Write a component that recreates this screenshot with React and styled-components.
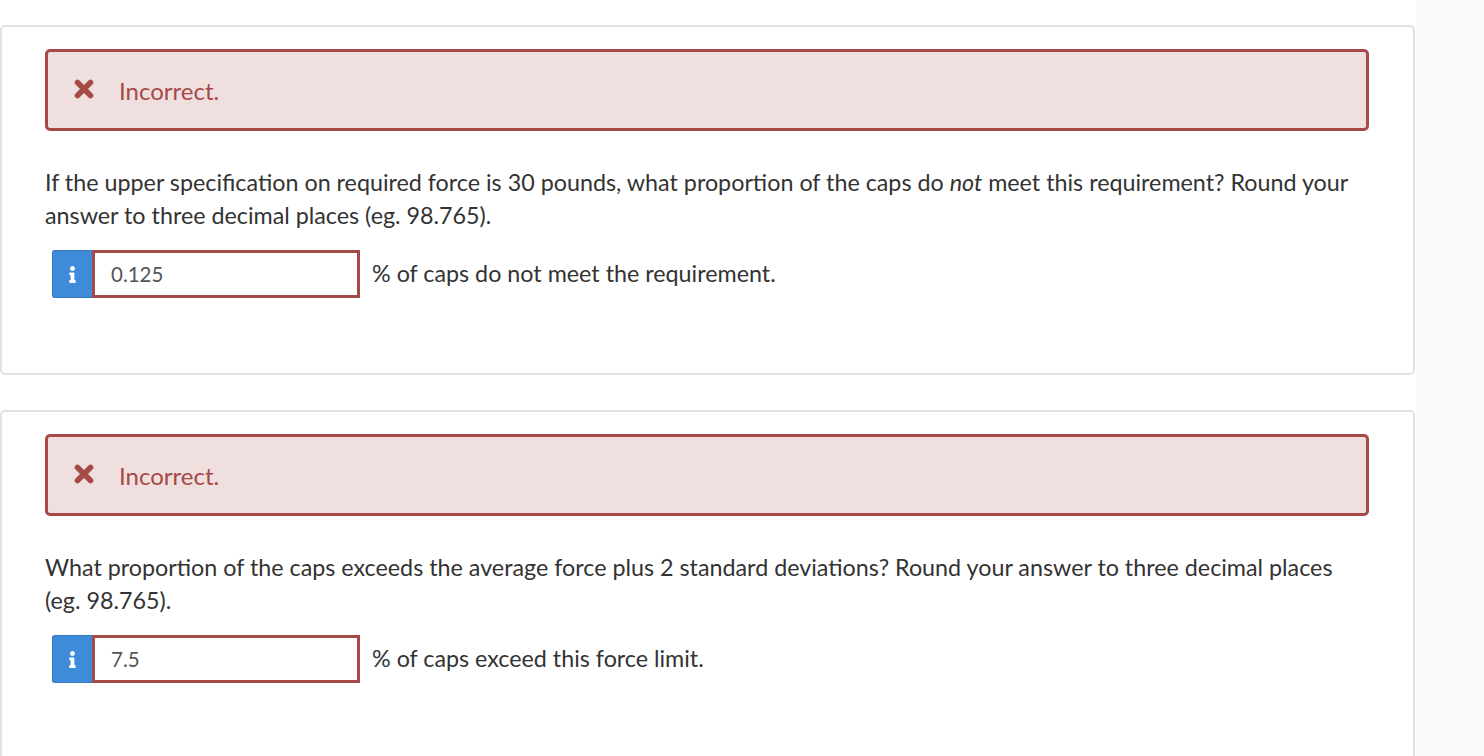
import React from "react";
import styled, { createGlobalStyle } from "styled-components";
import { FaInfo } from "react-icons/fa";

const GlobalStyle = createGlobalStyle`
  html, body {
    margin: 0;
    padding: 0;
    background: #f9f9f9;
  }
  body {
    font-family: Lato, "Open Sans", sans-serif;
    color: #333;
  }
`;

const questions = [
  {
    text: (
      <>
        If the upper specification on required force is 30 pounds, what
        proportion of the caps do <em>not</em> meet this requirement? Round
        your answer to three decimal places (eg. 98.765).
      </>
    ),
    value: "0.125",
    label: "% of caps do not meet the requirement.",
  },
  {
    text: (
      <>
        What proportion of the caps exceeds the average force plus 2 standard
        deviations? Round your answer to three decimal places (eg. 98.765).
      </>
    ),
    value: "7.5",
    label: "% of caps exceed this force limit.",
  },
];

const CrossIcon = () => (
  <svg width="22" height="20" viewBox="0 0 22 20">
    <path
      d="M4.5 3.5 L17.5 16.5 M17.5 3.5 L4.5 16.5"
      stroke="currentColor"
      strokeWidth="5.6"
      strokeLinecap="round"
      fill="none"
    />
  </svg>
);

const App = () => {
  return (
    <Page>
      <GlobalStyle />
      <Main>
        {questions.map((q, i) => (
          <Card key={i}>
            <Alert>
              <CrossIcon />
              <span>Incorrect.</span>
            </Alert>
            <Question>{q.text}</Question>
            <AnswerRow>
              <Addon>
                <FaInfo />
              </Addon>
              <Input defaultValue={q.value} />
              <Label>{q.label}</Label>
            </AnswerRow>
          </Card>
        ))}
      </Main>
      <Gutter />
    </Page>
  );
};

export default App;

const Page = styled.div`
  display: flex;
  min-height: 100vh;
`;

const Main = styled.div`
  width: 1416px;
  background: #fff;
  padding-top: 25px;
  display: flex;
  flex-direction: column;
  gap: 35px;
  box-sizing: border-box;
`;

const Gutter = styled.div`
  flex: 1;
  background: #f9f9f9;
`;

const Card = styled.div`
  width: 1415px;
  box-sizing: border-box;
  border: 2px solid #e2e2e2;
  border-radius: 5px;
  padding: 22px 44px 75px 43px;
`;

const Alert = styled.div`
  display: flex;
  align-items: center;
  gap: 24px;
  height: 82px;
  box-sizing: border-box;
  padding: 0 25px;
  background: #efdfdf;
  border: 3px solid #a54a46;
  border-radius: 5px;
  color: #a54a46;
  font-size: 24px;
  span {
    margin-top: 1px;
  }
  svg {
    flex: none;
    margin-top: -2px;
  }
`;

const Question = styled.p`
  margin: 35px 0 18px;
  font-size: 23.3px;
  line-height: 33px;
  color: #333;
`;

const AnswerRow = styled.div`
  display: flex;
  align-items: center;
  padding-left: 7px;
`;

const Addon = styled.div`
  width: 40px;
  height: 48px;
  display: flex;
  align-items: center;
  justify-content: center;
  background: #3d8bd9;
  border: 1px solid #3479c2;
  border-right: none;
  box-sizing: border-box;
  border-radius: 3px 0 0 3px;
  color: #fff;
  svg {
    font-size: 17px;
  }
`;

const Input = styled.input`
  width: 268px;
  height: 48px;
  box-sizing: border-box;
  border: 3px solid #a54a46;
  padding: 0 16px;
  font-family: Lato, "Open Sans", sans-serif;
  font-size: 20.5px;
  color: #555;
  background: #fff;
  outline: none;
`;

const Label = styled.span`
  margin-left: 12px;
  font-size: 23.3px;
  color: #333;
  margin-top: -2px;
`;
